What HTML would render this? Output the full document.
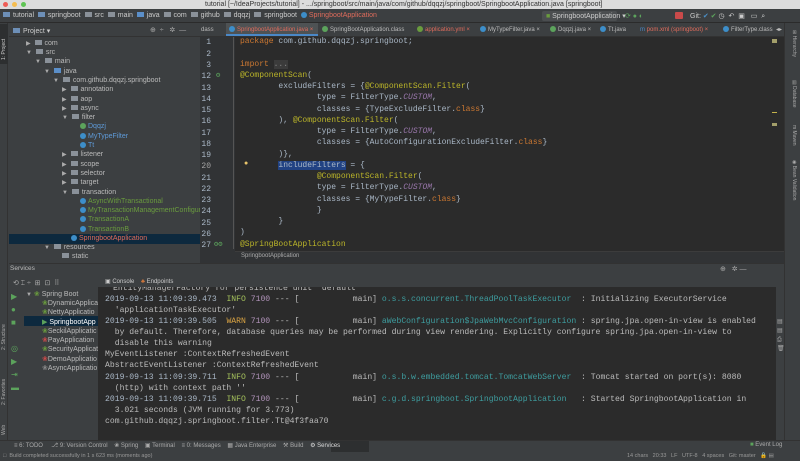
<!DOCTYPE html>
<html><head><meta charset="utf-8"><style>
*{margin:0;padding:0;box-sizing:border-box}
body{width:800px;height:461px;overflow:hidden;background:#3c3f41;font-family:"Liberation Sans",sans-serif;position:relative;color:#bbbbbb}
.a{position:absolute;white-space:pre}
.s{font-size:7px}
.m{font-family:"Liberation Mono",monospace;font-size:8px}
.code .a{font-family:"Liberation Mono",monospace;font-size:8px;color:#a9b7c6}
.k{color:#cc7832}.an{color:#bbb529}.f{color:#9876aa;font-style:italic}
.ln{color:#606366;font-family:"Liberation Mono",monospace;font-size:7.5px;text-align:right;width:20px}
.fo{display:inline-block;width:7px;height:5px;background:#8a9199;margin-right:3px;vertical-align:0}
.ci{display:inline-block;width:6px;height:6px;border-radius:50%;background:#3d8ec9;margin-right:2px;vertical-align:-1px}
.ar{color:#aaa;font-size:6px}
.con .a{font-family:"Liberation Mono",monospace;font-size:8.1px;color:#bbbbbb}
.d{color:#a9b7c6}.inf{color:#a5c25c}.pid{color:#b294bb}.lg{color:#3e9ea0}.w{color:#d9a343}
.tab{position:absolute;top:24px;height:12px;font-size:6px;line-height:12px;color:#bbb}
</style></head><body>
<!-- title bar -->
<div class="a" style="left:0;top:0;width:800px;height:9px;background:#dcdcdc"></div>
<div class="a" style="left:3px;top:2px;width:5px;height:5px;border-radius:50%;background:#ee5c55"></div>
<div class="a" style="left:12px;top:2px;width:5px;height:5px;border-radius:50%;background:#f5bd4f"></div>
<div class="a" style="left:21px;top:2px;width:5px;height:5px;border-radius:50%;background:#5fc454"></div>
<div class="a" style="left:205px;top:0;font-size:7px;color:#333;line-height:9px">tutorial [~/IdeaProjects/tutorial] - .../springboot/src/main/java/com/github/dqqzj/springboot/SpringbootApplication.java [springboot]</div>
<!-- nav bar -->
<div class="a" style="left:0;top:9px;width:800px;height:14px;background:#3c3f41;border-bottom:1px solid #2b2b2b"></div>
<div class="a s" style="left:3px;top:12px;color:#ccc"><span class="fo" style="background:#6d8fb7"></span>tutorial  <span class="fo" style="background:#6d8fb7"></span>springboot  <span class="fo"></span>src  <span class="fo"></span>main  <span class="fo" style="background:#5b8fc9"></span>java  <span class="fo"></span>com  <span class="fo"></span>github  <span class="fo"></span>dqqzj  <span class="fo"></span>springboot  <span class="ci"></span><span style="color:#e06c5c">SpringbootApplication</span></div>
<div class="a" style="left:542px;top:11px;width:75px;height:10px;background:#4b4e50;border-radius:2px"></div>
<div class="a s" style="left:546px;top:12px;color:#ccc"><span style="color:#6a9c3e">■</span> SpringbootApplication ▾</div>
<div class="a" style="left:625px;top:12px;font-size:7px;color:#5ca35c">⟳ ● ◐</div>
<div class="a" style="left:675px;top:12px;width:8px;height:7px;background:#c94a4a;border-radius:1px"></div>
<div class="a s" style="left:690px;top:12px;color:#ccc">Git: <span style="color:#4a90c8">✔</span> <span style="color:#5ca35c">✔</span> ◷  ↶  ▣   ▭  ⌕</div>
<!-- left strip -->
<div class="a" style="left:0;top:23px;width:8px;height:417px;background:#3c3f41;border-right:1px solid #323232"></div>
<div class="a" style="left:0;top:24px;width:8px;height:40px;background:#2d2f30"></div>
<div class="a" style="left:1px;top:60px;font-size:5px;transform:rotate(-90deg);transform-origin:0 0;color:#ccc">1: Project</div>
<div class="a" style="left:1px;top:350px;font-size:5px;transform:rotate(-90deg);transform-origin:0 0;color:#aaa">2: Structure</div>
<div class="a" style="left:1px;top:405px;font-size:5px;transform:rotate(-90deg);transform-origin:0 0;color:#aaa">2: Favorites</div>
<div class="a" style="left:1px;top:435px;font-size:5px;transform:rotate(-90deg);transform-origin:0 0;color:#aaa">Web</div>
<!-- project panel -->
<div class="a" style="left:9px;top:23px;width:191px;height:14px;background:#3c3f41;border-bottom:1px solid #323232"></div>
<div class="a s" style="left:13px;top:27px;color:#ccc"><span class="fo" style="background:#6d8fb7"></span>Project ▾</div>
<div class="a s" style="left:150px;top:26px;color:#aaa">⊕  ÷   ✲  —</div>
<div class="a" style="left:9px;top:37px;width:191px;height:226px;background:#3c3f41"></div>
<div class="a" style="left:9px;top:234px;width:191px;height:10px;background:#0d293e"></div>
<div class="s">
<div class="a" style="left:26px;top:40px"><span class="ar">▶</span>  <span class="fo"></span>com</div>
<div class="a" style="left:26px;top:49px"><span class="ar">▼</span>  <span class="fo"></span>src</div>
<div class="a" style="left:35px;top:58px"><span class="ar">▼</span>  <span class="fo"></span>main</div>
<div class="a" style="left:44px;top:68px"><span class="ar">▼</span>  <span class="fo" style="background:#5b8fc9"></span>java</div>
<div class="a" style="left:53px;top:77px"><span class="ar">▼</span>  <span class="fo"></span>com.github.dqqzj.springboot</div>
<div class="a" style="left:62px;top:86px"><span class="ar">▶</span>  <span class="fo"></span>annotation</div>
<div class="a" style="left:62px;top:96px"><span class="ar">▶</span>  <span class="fo"></span>aop</div>
<div class="a" style="left:62px;top:105px"><span class="ar">▶</span>  <span class="fo"></span>async</div>
<div class="a" style="left:62px;top:114px"><span class="ar">▼</span>  <span class="fo"></span>filter</div>
<div class="a" style="left:80px;top:123px;color:#5e9ad8"><span class="ci" style="background:#5ca35c"></span>Dqqzj</div>
<div class="a" style="left:80px;top:133px;color:#5e9ad8"><span class="ci"></span>MyTypeFilter</div>
<div class="a" style="left:80px;top:142px;color:#5e9ad8"><span class="ci"></span>Tt</div>
<div class="a" style="left:62px;top:151px"><span class="ar">▶</span>  <span class="fo"></span>listener</div>
<div class="a" style="left:62px;top:161px"><span class="ar">▶</span>  <span class="fo"></span>scope</div>
<div class="a" style="left:62px;top:170px"><span class="ar">▶</span>  <span class="fo"></span>selector</div>
<div class="a" style="left:62px;top:179px"><span class="ar">▶</span>  <span class="fo"></span>target</div>
<div class="a" style="left:62px;top:189px"><span class="ar">▼</span>  <span class="fo"></span>transaction</div>
<div class="a" style="left:80px;top:198px;color:#6a9c3e"><span class="ci"></span>AsyncWithTransactional</div>
<div class="a" style="left:80px;top:207px;color:#6a9c3e"><span class="ci"></span>MyTransactionManagementConfigure</div>
<div class="a" style="left:80px;top:216px;color:#6a9c3e"><span class="ci"></span>TransactionA</div>
<div class="a" style="left:80px;top:226px;color:#6a9c3e"><span class="ci"></span>TransactionB</div>
<div class="a" style="left:71px;top:235px;color:#e06c5c"><span class="ci"></span>SpringbootApplication</div>
<div class="a" style="left:44px;top:244px"><span class="ar">▼</span>  <span class="fo"></span>resources</div>
<div class="a" style="left:62px;top:253px"><span class="fo"></span>static</div>
</div>
<!-- editor tabs -->
<div class="a" style="left:200px;top:23px;width:584px;height:14px;background:#3c3f41;border-bottom:1px solid #323232"></div>
<div class="tab" style="left:201px">dass</div>
<div class="a" style="left:226px;top:23px;width:92px;height:13px;background:#4e5254;border-bottom:2px solid #4a88c7"></div>
<div class="tab" style="left:229px;color:#e06c5c"><span class="ci"></span>SpringbootApplication.java ×</div>
<div class="tab" style="left:322px"><span class="ci" style="background:#5ca35c"></span>SpringBootApplication.class</div>
<div class="tab" style="left:417px;color:#e06c5c"><span class="ci" style="background:#6a9c3e"></span>application.yml ×</div>
<div class="tab" style="left:480px"><span class="ci"></span>MyTypeFilter.java ×</div>
<div class="tab" style="left:550px"><span class="ci" style="background:#5ca35c"></span>Dqqzj.java ×</div>
<div class="tab" style="left:600px"><span class="ci"></span>Tt.java</div>
<div class="tab" style="left:640px;color:#e06c5c"><span style="color:#4a88c7">m</span> pom.xml (springboot) ×</div>
<div class="tab" style="left:723px"><span class="ci" style="background:#3d8ec9"></span>FilterType.class</div>
<div class="tab" style="left:776px">◂▸</div>
<!-- editor -->
<div class="a" style="left:200px;top:37px;width:35px;height:226px;background:#313335"></div>
<div class="a" style="left:235px;top:37px;width:549px;height:226px;background:#2b2b2b"></div>
<div class="a" style="left:233px;top:37px;width:1px;height:212px;background:#555"></div>
<div class="code">
<div class="a ln" style="left:191px;top:38px">1</div><div class="a" style="left:240px;top:37px"><span class="k">package</span> com.github.dqqzj.springboot;</div>
<div class="a ln" style="left:191px;top:50px">2</div>
<div class="a ln" style="left:191px;top:61px">3</div><div class="a" style="left:240px;top:60px"><span class="k">import</span> <span style="background:#3b3b3b;color:#888">...</span></div>
<div class="a ln" style="left:191px;top:72px">12</div><div class="a" style="left:216px;top:71px;color:#5ca35c;font-size:7px">⚙</div><div class="a" style="left:240px;top:71px"><span class="an">@ComponentScan</span>(</div>
<div class="a ln" style="left:191px;top:84px">13</div><div class="a" style="left:240px;top:82px">        excludeFilters = {<span class="an">@ComponentScan.Filter</span>(</div>
<div class="a ln" style="left:191px;top:95px">14</div><div class="a" style="left:240px;top:93px">                type = FilterType.<span class="f">CUSTOM</span>,</div>
<div class="a ln" style="left:191px;top:106px">15</div><div class="a" style="left:240px;top:105px">                classes = {TypeExcludeFilter.<span class="k">class</span>}</div>
<div class="a ln" style="left:191px;top:117px">16</div><div class="a" style="left:240px;top:116px">        ), <span class="an">@ComponentScan.Filter</span>(</div>
<div class="a ln" style="left:191px;top:129px">17</div><div class="a" style="left:240px;top:127px">                type = FilterType.<span class="f">CUSTOM</span>,</div>
<div class="a ln" style="left:191px;top:140px">18</div><div class="a" style="left:240px;top:138px">                classes = {AutoConfigurationExcludeFilter.<span class="k">class</span>}</div>
<div class="a ln" style="left:191px;top:151px">19</div><div class="a" style="left:240px;top:150px">        )},</div>
<div class="a" style="left:244px;top:160px;color:#e8c46a;font-size:7px">●</div>
<div class="a ln" style="left:191px;top:162px;color:#a4a3a3">20</div><div class="a" style="left:240px;top:161px">        <span style="background:#214283">includeFilters</span> = {</div>
<div class="a ln" style="left:191px;top:174px">21</div><div class="a" style="left:240px;top:172px">                <span class="an">@ComponentScan.Filter</span>(</div>
<div class="a ln" style="left:191px;top:185px">22</div><div class="a" style="left:240px;top:183px">                type = FilterType.<span class="f">CUSTOM</span>,</div>
<div class="a ln" style="left:191px;top:196px">23</div><div class="a" style="left:240px;top:195px">                classes = {MyTypeFilter.<span class="k">class</span>}</div>
<div class="a ln" style="left:191px;top:207px">24</div><div class="a" style="left:240px;top:206px">                }</div>
<div class="a ln" style="left:191px;top:219px">25</div><div class="a" style="left:240px;top:217px">        }</div>
<div class="a ln" style="left:191px;top:230px">26</div><div class="a" style="left:240px;top:228px">)</div>
<div class="a ln" style="left:191px;top:241px">27</div><div class="a" style="left:214px;top:240px;color:#5ca35c;font-size:7px">⚙⚙</div><div class="a" style="left:240px;top:240px"><span class="an">@SpringBootApplication</span></div>
</div>
<div class="a" style="left:235px;top:251px;width:549px;height:12px;background:#313335;border-top:1px solid #3c3c3c"></div>
<div class="a" style="left:241px;top:253px;font-size:6px;color:#aaa">SpringbootApplication</div>
<div class="a" style="left:772px;top:39px;width:5px;height:4px;background:#a39f6a"></div>
<div class="a" style="left:772px;top:112px;width:5px;height:1px;background:#c5b34a"></div>
<div class="a" style="left:772px;top:123px;width:5px;height:3px;background:#a39f6a"></div>
<!-- right strip -->
<div class="a" style="left:784px;top:23px;width:16px;height:417px;background:#3c3f41;border-left:1px solid #323232"></div>
<div class="a" style="left:797px;top:30px;font-size:5px;transform:rotate(90deg);transform-origin:0 0;color:#aaa">⊞ Hierarchy</div>
<div class="a" style="left:797px;top:80px;font-size:5px;transform:rotate(90deg);transform-origin:0 0;color:#aaa">▤ Database</div>
<div class="a" style="left:797px;top:125px;font-size:5px;transform:rotate(90deg);transform-origin:0 0;color:#aaa">m Maven</div>
<div class="a" style="left:797px;top:160px;font-size:5px;transform:rotate(90deg);transform-origin:0 0;color:#aaa">◉ Bean Validation</div>
<!-- services -->
<div class="a" style="left:9px;top:263px;width:775px;height:14px;background:#3c3f41;border-top:1px solid #323232"></div>
<div class="a" style="left:10px;top:265px;font-size:6.5px;color:#bbb">Services</div>
<div class="a" style="left:720px;top:265px;font-size:7px;color:#aaa">⊕   ✲ —</div>
<div class="a" style="left:9px;top:277px;width:90px;height:163px;background:#3c3f41"></div>
<div class="a s" style="left:13px;top:279px;color:#aaa">⟲ ⌶ ÷  ⊞  ⊡  ⠿</div>
<div class="a" style="left:11px;top:290px;font-size:8px;color:#5ca35c;line-height:13px;white-space:pre">▶
●
■

◎
▶
⇥
▬</div>
<div class="a" style="left:98px;top:277px;width:686px;height:10px;background:#3c3f41"></div>
<div class="a" style="left:105px;top:278px;font-size:6px;color:#ccc">▣ Console    <span style="color:#d87a3c">♣</span> Endpoints</div>
<div class="a" style="left:24px;top:316px;width:74px;height:10px;background:#0d293e"></div>
<div class="s">
<div class="a" style="left:26px;top:290px"><span class="ar">▼</span> <span style="color:#6a9c3e">❀</span> Spring Boot</div>
<div class="a" style="left:42px;top:299px"><span style="color:#6a9c3e">❀</span>DynamicApplica</div>
<div class="a" style="left:42px;top:308px"><span style="color:#6a9c3e">❀</span>NettyApplicatio</div>
<div class="a" style="left:42px;top:318px;color:#fff"><span style="color:#5ca35c">▶</span> SpringbootApp</div>
<div class="a" style="left:42px;top:327px"><span style="color:#6a9c3e">❀</span>SeckilApplicatic</div>
<div class="a" style="left:42px;top:336px"><span style="color:#c94a4a">❀</span>PayApplication</div>
<div class="a" style="left:42px;top:345px"><span style="color:#6a9c3e">❀</span>SecurityApplicat</div>
<div class="a" style="left:42px;top:355px"><span style="color:#c94a4a">❀</span>DemoApplicatio</div>
<div class="a" style="left:42px;top:364px"><span style="color:#888">❀</span>AsyncApplicatio</div>
</div>
<div class="a" style="left:98px;top:287px;width:678px;height:153px;background:#2b2b2b"></div>
<div class="a" style="left:776px;top:287px;width:8px;height:153px;background:#3c3f41"></div>
<div class="a" style="left:777px;top:318px;font-size:6px;color:#aaa;line-height:9px;white-space:pre">▤
▤
⎙
🗑</div>
<div class="con" style="position:absolute;left:98px;top:287px;width:678px;height:153px;overflow:hidden">
<div class="a" style="left:15px;top:-3px">EntityManagerFactory for persistence unit 'default'</div>
<div class="a" style="left:7px;top:8px"><span class="d">2019-09-13 11:09:39.473</span>  <span class="inf">INFO</span> <span class="pid">7100</span> --- [           main] <span class="lg">o.s.s.concurrent.ThreadPoolTaskExecutor</span>  : Initializing ExecutorService</div>
<div class="a" style="left:7px;top:19px">  'applicationTaskExecutor'</div>
<div class="a" style="left:7px;top:30px"><span class="d">2019-09-13 11:09:39.505</span>  <span class="w">WARN</span> <span class="pid">7100</span> --- [           main] <span class="lg">aWebConfiguration$JpaWebMvcConfiguration</span> : spring.jpa.open-in-view is enabled</div>
<div class="a" style="left:7px;top:41px">  by default. Therefore, database queries may be performed during view rendering. Explicitly configure spring.jpa.open-in-view to</div>
<div class="a" style="left:7px;top:52px">  disable this warning</div>
<div class="a" style="left:7px;top:63px">MyEventListener :ContextRefreshedEvent</div>
<div class="a" style="left:7px;top:74px">AbstractEventListener :ContextRefreshedEvent</div>
<div class="a" style="left:7px;top:86px"><span class="d">2019-09-13 11:09:39.711</span>  <span class="inf">INFO</span> <span class="pid">7100</span> --- [           main] <span class="lg">o.s.b.w.embedded.tomcat.TomcatWebServer</span>  : Tomcat started on port(s): 8080</div>
<div class="a" style="left:7px;top:97px">  (http) with context path ''</div>
<div class="a" style="left:7px;top:108px"><span class="d">2019-09-13 11:09:39.715</span>  <span class="inf">INFO</span> <span class="pid">7100</span> --- [           main] <span class="lg">c.g.d.springboot.SpringbootApplication</span>   : Started SpringbootApplication in</div>
<div class="a" style="left:7px;top:119px">  3.021 seconds (JVM running for 3.773)</div>
<div class="a" style="left:7px;top:130px">com.github.dqqzj.springboot.filter.Tt@4f3faa70</div>
</div>
<!-- bottom tool bar -->
<div class="a" style="left:0;top:440px;width:800px;height:12px;background:#3c3f41;border-top:1px solid #323232"></div>
<div class="a" style="left:331px;top:441px;width:38px;height:11px;background:#2d2f30"></div>
<div class="a" style="left:14px;top:442px;font-size:6px;color:#aaa">≡ 6: TODO     ⎇ 9: Version Control    ❀ Spring    ▣ Terminal    ≡ 0: Messages    ▦ Java Enterprise    ⚒ Build    <span style="color:#ddd">⚙ Services</span></div>
<div class="a" style="left:750px;top:442px;font-size:6px;color:#aaa"><span style="color:#5ca35c">■</span> Event Log</div>
<div class="a" style="left:0;top:452px;width:800px;height:9px;background:#3c3f41"></div>
<div class="a" style="left:3px;top:453px;font-size:5.5px;color:#999">□  Build completed successfully in 1 s 623 ms (moments ago)</div>
<div class="a" style="left:627px;top:453px;font-size:5.5px;color:#999">14 chars   20:33   LF   UTF-8   4 spaces   Git: master   🔒 ▤</div>
</body></html>
